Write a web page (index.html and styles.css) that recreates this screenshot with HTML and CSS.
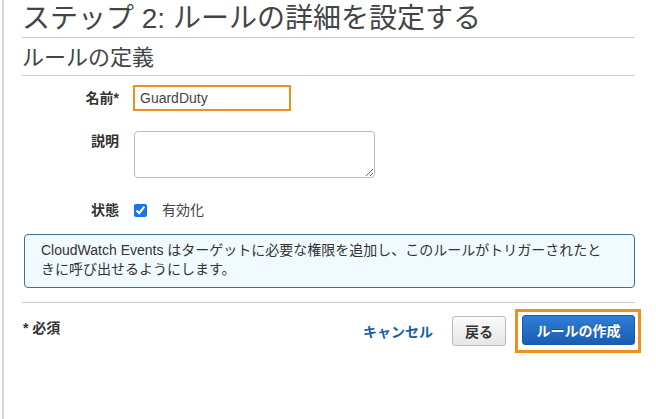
FILE: index.html
```html
<!DOCTYPE html>
<html lang="ja">
    <head>
        <meta charset="utf-8">
        <title>ルールの詳細</title>
        <link rel="stylesheet" href="styles.css">
    </head>
    <body>
    <div class="page">
        <h1 class="title">ステップ 2: ルールの詳細を設定する</h1>
        <h2 class="section">ルールの定義</h2>

        <div class="form">
            <div class="row row-name">
                <label class="label" for="name">名前*</label>
                <input class="name-field" id="name" type="text" value="GuardDuty">
            </div>
            <div class="row row-desc">
                <label class="label" for="desc">説明</label>
                <textarea class="desc-field" id="desc"></textarea>
            </div>
            <div class="row row-state">
                <span class="label">状態</span>
                <label class="check"><input type="checkbox" checked> <span>有効化</span></label>
            </div>
        </div>

        <div class="info">
            CloudWatch Events はターゲットに必要な権限を追加し、このルールがトリガーされたと<br>きに呼び出せるようにします。
        </div>

        <div class="footer">
            <span class="required">* 必須</span>
            <div class="actions">
                <a class="cancel" href="#">キャンセル</a>
                <button class="btn btn-back">戻る</button>
                <span class="mark"><button class="btn btn-primary">ルールの作成</button></span>
            </div>
        </div>
    </div>
    </body>
</html>
```
FILE: styles.css
```css
*{margin:0; padding:0; box-sizing:border-box;}
body{font-family:"Liberation Sans", "Noto Sans CJK JP", sans-serif; font-size:14px; color:#333; background:#fff;}

.page{margin-left:2px; border-left:2px solid #d6d6d6; height:419px; padding:0 21px 0 18px;}

.title{font-size:28px; font-weight:normal; color:#444; line-height:37px; border-bottom:1px solid #ccc;}
.section{font-size:22px; font-weight:normal; color:#444; line-height:35px; padding-top:2px; border-bottom:1px solid #ccc;}

.form{padding-top:9px;}
.row{display:grid; grid-template-columns:97px 1fr; column-gap:14px; align-items:center;}
.label{font-weight:bold; text-align:right; line-height:20px; color:#333;}

.name-field{width:158px; height:26px; border:2px solid #ef8f1c; padding:0 5px; font:14px "Liberation Sans", sans-serif; color:#444; outline:none;}

.row-desc{margin-top:20px; align-items:start;}
.desc-field{width:241px; height:47px; margin-left:1px; border:1px solid #bbb; border-radius:4px; resize:vertical; font:14px "Liberation Sans", sans-serif;}

.row-state{margin-top:22px;}
.check{display:flex; align-items:center; gap:15px; line-height:20px; color:#444;}
.check input{width:13px; height:13px; margin-left:1px; accent-color:#1a73e8;}

.info{margin:14px 0 0 2px; padding:6px 16px 8px; background:#f1faff; border:1px solid #3d6f98; border-radius:4px; line-height:19px; color:#333;}

.footer{margin-top:14px; border-top:1px solid #ccc; display:flex; justify-content:space-between; align-items:flex-start; padding-top:6px;}
.required{font-weight:bold; padding:9px 0 0 1px; line-height:20px;}
.actions{display:flex; align-items:center; margin-right:-6px;}
.cancel{color:#1b5ea8; font-weight:bold; text-decoration:none; margin-right:19px;}
.btn{font:bold 14px "Liberation Sans", "Noto Sans CJK JP", sans-serif; height:30px; border-radius:3px; cursor:pointer;}
.btn-back{width:54px; color:#333; border:1px solid #bbb; background:linear-gradient(#fafafa, #e6e6e6); margin-right:9px;}
.mark{display:block; border:3px solid #ef8f1c; padding:3px 3px 5px 4px;}
.btn-primary{display:block; width:113px; color:#fff; border:1px solid #1b58a6; background:linear-gradient(#2f7ed6, #1a5db2); text-shadow:0 -1px 0 rgba(0,0,0,0.3);}
```
